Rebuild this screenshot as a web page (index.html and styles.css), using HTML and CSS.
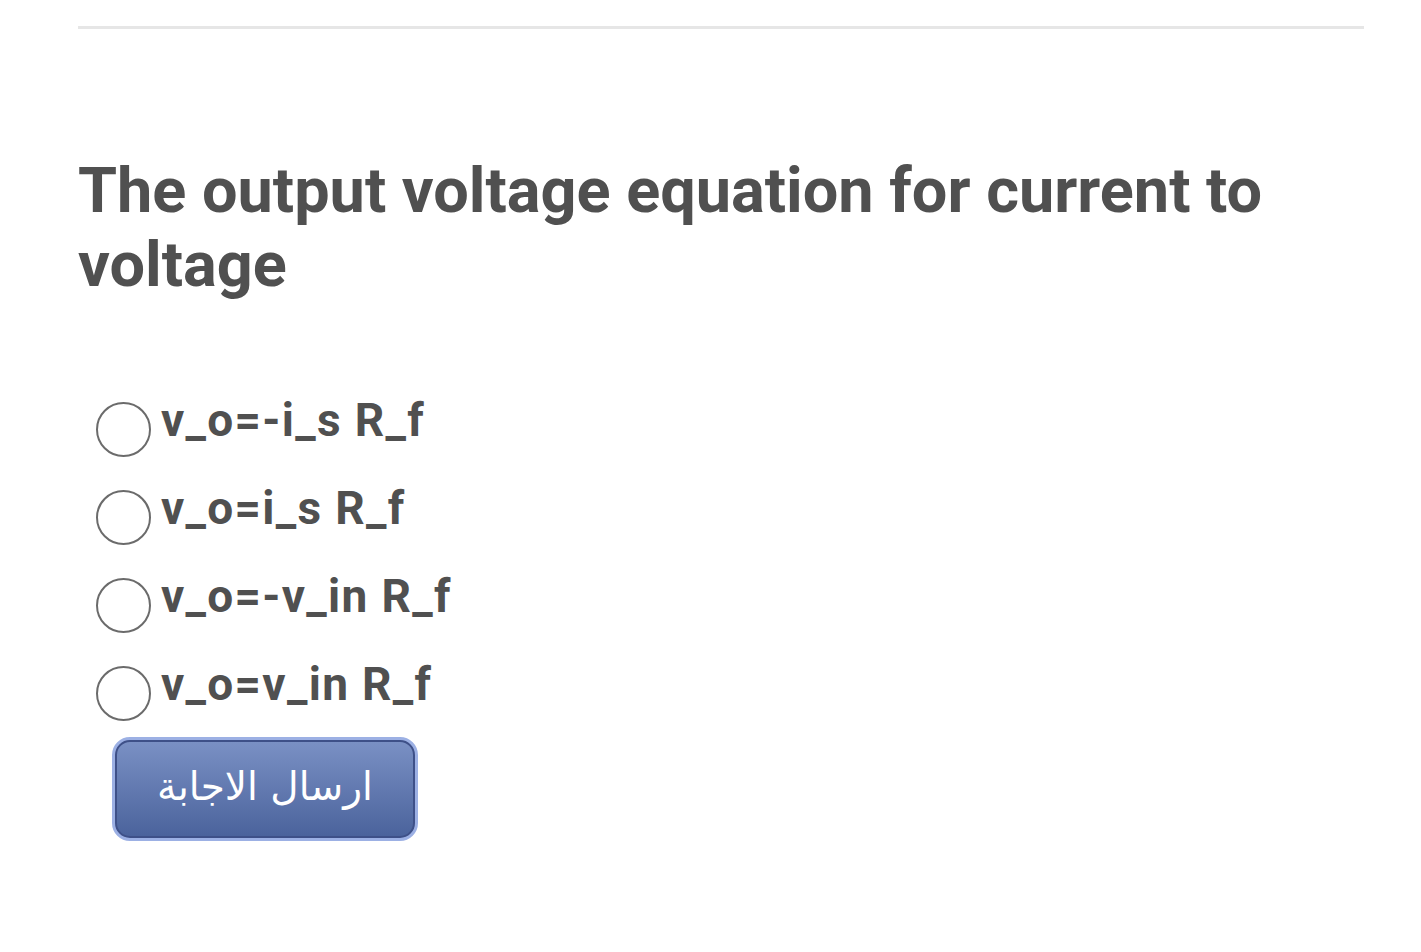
FILE: index.html
```html
<!DOCTYPE html>
<html lang="en">
<head>
<meta charset="utf-8">
<link rel="stylesheet" href="styles.css">
</head>
<body>
<div class="page">
  <hr class="divider">
  <h1 class="question">The output voltage equation for current to voltage</h1>
  <form class="options">
    <label class="option"><span class="radio"></span><span class="label">v_o=-i_s R_f</span></label>
    <label class="option"><span class="radio"></span><span class="label">v_o=i_s R_f</span></label>
    <label class="option"><span class="radio"></span><span class="label">v_o=-v_in R_f</span></label>
    <label class="option"><span class="radio"></span><span class="label">v_o=v_in R_f</span></label>
    <button type="button" class="submit"><span class="submit-inner" dir="rtl">ارسال الاجابة</span></button>
  </form>
</div>
</body>
</html>
```

FILE: styles.css
```css
html, body {
  margin: 0;
  padding: 0;
  background: #ffffff;
}
body {
  font-family: Roboto, "Liberation Sans", sans-serif;
  color: #505050;
}
.page {
  padding: 26px 57px 0 78px;
}
.divider {
  margin: 0;
  border: 0;
  height: 3px;
  background: #e6e6e6;
}
.question {
  margin: 125px 0 0 0;
  font-size: 63px;
  line-height: 74px;
  font-weight: 700;
  color: #505050;
  max-width: 1230px;
}
.options {
  margin: 74px 0 0 18px;
  display: flex;
  flex-direction: column;
  align-items: flex-start;
}
.option {
  display: flex;
  align-items: center;
  height: 88px;
  gap: 10px;
}
.radio {
  width: 51px;
  height: 51px;
  border: 2.5px solid #6b6b6b;
  border-radius: 50%;
  margin-top: 18px;
}
.label {
  font-size: 46px;
  font-weight: 700;
  letter-spacing: 1.3px;
  color: #505050;
  line-height: 1;
}
.submit {
  margin: 9px 0 0 16px;
  padding: 0;
  width: 306px;
  height: 104px;
  border: 3px solid #9cb0e4;
  border-radius: 18px;
  background: #9cb0e4;
  cursor: pointer;
}
.submit-inner {
  display: flex;
  align-items: center;
  justify-content: center;
  height: 100%;
  box-sizing: border-box;
  border: 2px solid #3e5088;
  border-radius: 15px;
  background: linear-gradient(#7a90c4, #4b639c);
  color: #ffffff;
  font-family: "DejaVu Sans", "Noto Sans", sans-serif;
  font-size: 39px;
  padding-bottom: 6px;
}
```
